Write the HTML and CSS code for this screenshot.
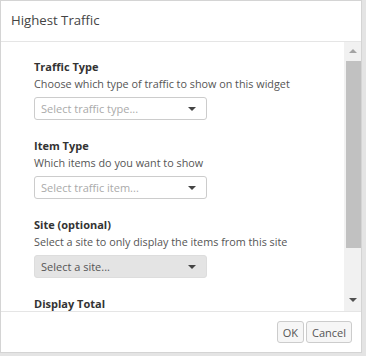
FILE: index.html
```html
<!DOCTYPE html>
<html lang="en">
<head>
    <meta charset="UTF-8">
    <title>Highest Traffic</title>
    <link rel="stylesheet" href="styles.css">
</head>
<body>
    <div class="dialog">
        <div class="dialog-header">Highest Traffic</div>
        <div class="dialog-body">
            <div class="form">
                <div class="field">
                    <div class="field-label">Traffic Type</div>
                    <div class="field-help">Choose which type of traffic to show on this widget</div>
                    <div class="select"><span class="placeholder">Select traffic type...</span><span class="caret"></span></div>
                </div>
                <div class="field">
                    <div class="field-label">Item Type</div>
                    <div class="field-help">Which items do you want to show</div>
                    <div class="select"><span class="placeholder">Select traffic item...</span><span class="caret"></span></div>
                </div>
                <div class="field">
                    <div class="field-label">Site (optional)</div>
                    <div class="field-help">Select a site to only display the items from this site</div>
                    <div class="select disabled"><span>Select a site...</span><span class="caret"></span></div>
                </div>
                <div class="field">
                    <div class="field-label">Display Total</div>
                </div>
            </div>
            <div class="scrollbar">
                <span class="arrow up"></span>
                <div class="track"><div class="thumb"></div></div>
                <span class="arrow down"></span>
            </div>
        </div>
        <div class="dialog-footer">
            <button>OK</button>
            <button>Cancel</button>
        </div>
    </div>
</body>
</html>
```

FILE: styles.css
```css
body {
    margin: 0;
    background: #e4e4e4;
    font-family: 'Open Sans', sans-serif;
    color: #333;
}
.dialog {
    width: 360px;
    height: 351px;
    background: white;
    border: 1px solid #d4d4d4;
    display: flex;
    flex-direction: column;
}
.dialog-header {
    height: 41px;
    flex-shrink: 0;
    box-sizing: border-box;
    padding: 10px 10px;
    font-size: 13.2px;
    color: #444;
    border-bottom: 1px solid #e5e5e5;
}
.dialog-body {
    flex: 1;
    display: flex;
    overflow: hidden;
    border-bottom: 1px solid #e5e5e5;
}
.form {
    flex: 1;
    padding: 16px 0 0 33px;
    overflow: hidden;
}
.field { margin-bottom: 17px; }
.field-label { font-size: 11px; font-weight: bold; color: #333; line-height: 18px; }
.field-help { font-size: 10.8px; color: #555; line-height: 16px; margin-bottom: 5px; }
.select {
    width: 173px;
    height: 23px;
    box-sizing: border-box;
    border: 1px solid #ccc;
    border-radius: 3px;
    display: flex;
    align-items: center;
    justify-content: space-between;
    padding: 0 10px 0 6px;
    font-size: 11px;
    color: #555;
}
.select .placeholder { color: #aaa; }
.select.disabled { background: #e4e4e4; border-color: #ddd; }
.caret {
    width: 0;
    height: 0;
    border-left: 4px solid transparent;
    border-right: 4px solid transparent;
    border-top: 4px solid #444;
}
.scrollbar {
    width: 17px;
    background: #f1f1f1;
    display: flex;
    flex-direction: column;
    align-items: center;
}
.arrow {
    width: 0;
    height: 0;
    border-left: 4px solid transparent;
    border-right: 4px solid transparent;
    margin: 7px 0;
}
.arrow.up { border-bottom: 4px solid #a3a3a3; }
.arrow.down { border-top: 4px solid #505050; margin-bottom: 9px; }
.track { flex: 1; width: 100%; }
.thumb { height: 187px; background: #c1c1c1; margin: 1px 0 0 2px; }
.dialog-footer {
    height: 40px;
    flex-shrink: 0;
    display: flex;
    justify-content: flex-end;
    align-items: center;
    gap: 2px;
    padding-right: 9px;
}
button {
    font-family: 'Open Sans', sans-serif;
    font-size: 11px;
    color: #555;
    background: #f6f6f6;
    border: 1px solid #ccc;
    border-radius: 3px;
    height: 22px;
    padding: 0 5px;
}
```
